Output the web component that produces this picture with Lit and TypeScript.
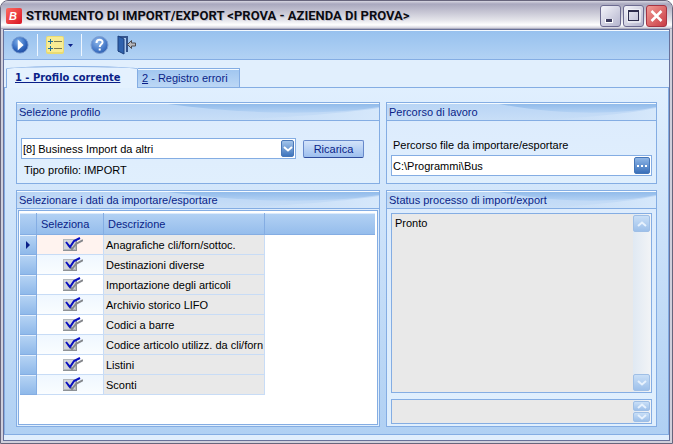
import { LitElement, html, css, svg } from "lit";
import { customElement, property, state } from "lit/decorators.js";

@customElement("group-box")
class GroupBox extends LitElement {
  @property() heading = "";

  static styles = css`
    :host {
      display: flex;
      flex-direction: column;
      min-width: 0;
      border: 1px solid #84ade3;
      box-sizing: border-box;
    }
    .head {
      position: relative;
      flex: none;
      height: 18px;
      box-sizing: border-box;
      border-top: 1px solid #f4faff;
      border-bottom: 1px solid #84ade3;
      background: linear-gradient(#b9d5f5, #c8def7);
      overflow: hidden;
    }
    .swoosh {
      position: absolute;
      inset: 0;
      width: 100%;
      height: 100%;
    }
    h2 {
      position: relative;
      margin: 0;
      padding-left: 2px;
      font-size: 11px;
      line-height: 16px;
      font-weight: 400;
      color: #0a1f88;
      white-space: nowrap;
    }
    .body {
      flex: 1;
      display: flex;
      flex-direction: column;
      min-height: 0;
      background: linear-gradient(#ddecfd, #e0effd);
    }
  `;

  render() {
    return html`
      <div class="head">
        <svg class="swoosh" viewBox="0 0 360 16" preserveAspectRatio="none" aria-hidden="true">
          <defs>
            <linearGradient id="s" x1="0" y1="0" x2="0" y2="1">
              <stop offset="0" stop-color="#91bbea" />
              <stop offset="1" stop-color="#b4d2f4" />
            </linearGradient>
            <linearGradient id="f" x1="0" x2="1">
              <stop offset="0" stop-color="#cfe2f8" stop-opacity="0" />
              <stop offset="1" stop-color="#d6e8fb" />
            </linearGradient>
          </defs>
          <path d="M150 0H360V3C310 11 230 11 150 0Z" fill="url(#s)" />
          <path d="M200 16C260 14 320 10 360 4V16Z" fill="url(#f)" />
        </svg>
        <h2>${this.heading}</h2>
      </div>
      <div class="body"><slot></slot></div>
    `;
  }
}

const chevron = (up: boolean, color: string) => html`
  <svg width="10" height="6" viewBox="0 0 10 6" aria-hidden="true">
    <path d=${up ? "M1 5L5 1.5L9 5" : "M1 1L5 4.5L9 1"} fill="none" stroke=${color} stroke-width="2" />
  </svg>
`;

const checkMark = svg`
  <rect x="0" y="2" width="14" height="12" fill="#8d9196" />
  <rect x="0" y="2" width="13" height="11" fill="#b4b7bb" />
  <rect x="1" y="3" width="11" height="9" fill="#d2d5d9" />
  <path d="M5 8L9 12L13 7L20 3" fill="none" stroke="#85888d" stroke-width="2" />
  <path d="M3 5L7 10L11 4L17 1" fill="none" stroke="#0a10c0" stroke-width="2" />
`;

@customElement("app-root")
class AppRoot extends LitElement {
  @state() private current = 0;

  private rows = [
    "Anagrafiche cli/forn/sottoc.",
    "Destinazioni diverse",
    "Importazione degli articoli",
    "Archivio storico LIFO",
    "Codici a barre",
    "Codice articolo utilizz. da cli/forn",
    "Listini",
    "Sconti",
  ];

  static styles = css`
    :host {
      display: block;
      font-family: "Liberation Sans", Roboto, sans-serif;
      font-size: 11px;
      line-height: 14px;
      color: #000;
    }
    * {
      box-sizing: border-box;
    }
    button,
    input,
    select,
    textarea {
      font: inherit;
      margin: 0;
    }
    svg {
      display: block;
    }
    .window {
      min-height: 100vh;
      display: flex;
      flex-direction: column;
      border: 1px solid #67657c;
      border-radius: 8px 8px 0 0;
      background: linear-gradient(#a9a8bc, #d6d5df 8px, #d0cfdb 8px);
      padding: 0 2px 2px;
    }
    .titlebar {
      height: 28px;
      margin: 0 -2px;
      padding: 1px 5px 0;
      display: flex;
      align-items: center;
      gap: 4px;
      border-radius: 7px 7px 0 0;
      background: linear-gradient(#d8d7e2 0, #a9a8be 3px, #c3c2d1 10px, #e4e4ea 19px, #fff 24px, #d0d0dc 27px, #8e8da2 28px);
    }
    .logo {
      flex: none;
    }
    h1 {
      flex: 1;
      margin: 0;
      font-family: Roboto, "Noto Sans", sans-serif;
      font-size: 13px;
      line-height: 20px;
      font-weight: 700;
      white-space: nowrap;
      overflow: hidden;
      color: #0b0b12;
      text-shadow: 1px 1px 0 #c4c3d0;
    }
    .controls {
      display: flex;
      gap: 2px;
    }
    .control {
      width: 21px;
      height: 22px;
      padding: 0;
      display: grid;
      place-items: center;
      border: 1px solid #6d6b90;
      border-radius: 3px;
      background: linear-gradient(135deg, #f4f4fa, #b4b4cd);
    }
    .control.close {
      border-color: #a53443;
      background: linear-gradient(135deg, #f19a94, #c93c44);
    }
    .client {
      flex: 1;
      display: flex;
      flex-direction: column;
      border: 1px solid #68719a;
      background: #e0eefd;
    }
    .toolbar {
      height: 30px;
      display: flex;
      align-items: center;
      padding: 0 7px;
      border-top: 1px solid #f3f9ff;
      border-bottom: 1px solid #84ade3;
      background: linear-gradient(#97c1ee, #b2d2f4);
    }
    .tool {
      border: 0;
      padding: 0;
      background: none;
      display: flex;
      align-items: center;
      gap: 4px;
    }
    .sep {
      width: 1px;
      height: 22px;
      margin: 0 8px;
      background: #eef6ff;
    }
    .tool.exit {
      margin-left: 8px;
    }
    .tabs {
      display: flex;
      align-items: flex-end;
      height: 28px;
      padding-left: 2px;
      background: #e1effd;
      box-shadow: inset 0 -1px #84ade3;
    }
    .tab {
      border: 1px solid #84ade3;
      padding: 0 8px;
      color: #0a1f88;
      text-align: left;
      white-space: nowrap;
    }
    .tab.active {
      flex: none;
      width: 132px;
      height: 22px;
      border-bottom: 0;
      border-radius: 66px 66px 0 0 / 3px 3px 0 0;
      background: #e4f1fe;
      font-family: "DejaVu Sans Condensed", sans-serif;
      font-weight: 700;
      text-decoration: underline;
    }
    .tab.idle {
      height: 20px;
      width: 102px;
      padding: 0 4px;
      border-left: 0;
      background: linear-gradient(#a0c6f0, #bcd7f5);
      box-shadow: inset 0 1px #f3f9ff;
    }
    .panel {
      flex: 1;
      display: grid;
      grid-template-columns: 364fr 271fr;
      grid-template-rows: 82px 1fr;
      gap: 6px;
      padding: 14px 11px 7px;
      margin-bottom: 5px;
      border: 1px solid #84ade3;
      border-top: 0;
      background: linear-gradient(#e0effe, #cbe1f9 45%, #b0d0f3);
    }
    .profile {
      display: flex;
      align-items: center;
      gap: 7px;
      margin: 17px 15px 4px 4px;
    }
    .field {
      position: relative;
      flex: 1;
      height: 21px;
      display: flex;
      border: 1px solid #84ade3;
      background: #fff;
    }
    .field select,
    .field input {
      appearance: none;
      flex: 1;
      min-width: 0;
      border: 0;
      padding: 0 20px 0 1px;
      background: none;
      color: #000;
      outline: none;
    }
    .drop {
      position: absolute;
      right: 1px;
      top: 1px;
      width: 13px;
      height: 17px;
      display: grid;
      place-items: center;
      border: 1px solid #4a78b8;
      border-radius: 2px;
      background: linear-gradient(#a3c4ea, #3f75bd);
      pointer-events: none;
    }
    .more {
      flex: none;
      width: 16px;
      height: 17px;
      margin: 1px;
      padding: 0;
      display: grid;
      place-items: center;
      border: 1px solid #4576b8;
      border-radius: 2px;
      background: linear-gradient(#8fb6e6, #3a70ba);
    }
    .reload {
      width: 61px;
      height: 18px;
      padding: 0;
      border: 1px solid #6789cb;
      border-bottom-color: #2f4c9c;
      border-radius: 2px;
      background: linear-gradient(#d3e3fa, #9dbfee);
      color: #0a1f88;
    }
    .kind {
      margin: 0 7px;
    }
    .path {
      display: flex;
      flex-direction: column;
      gap: 3px;
      margin: 17px 4px 0;
    }
    .path .field {
      flex: none;
    }
    .path label {
      padding-left: 2px;
    }
    .list {
      flex: 1;
      margin: 1px;
      padding: 2px 2px 0 1px;
      border: 1px solid #84ade3;
      background: #fff;
    }
    table {
      width: 100%;
      border-collapse: separate;
      border-spacing: 0;
      table-layout: fixed;
    }
    th {
      height: 22px;
      padding: 0 2px 0 4px;
      text-align: left;
      font-weight: 400;
      color: #0a1f88;
      background: linear-gradient(#b4d2f4, #95bdec);
      border-right: 1px solid #84ade3;
      border-bottom: 1px solid #84ade3;
      box-shadow: inset 0 1px #dcebfc;
    }
    .c-mark {
      width: 17px;
    }
    .c-check {
      width: 67px;
    }
    .c-text {
      width: 161px;
    }
    th.fill {
      border-right: 0;
    }
    td {
      height: 20px;
      padding: 0 2px;
      border-bottom: 1px solid #c8dcf6;
      border-right: 1px solid #c8dcf6;
      white-space: nowrap;
    }
    td.mark {
      padding: 0;
      border-right-color: #84ade3;
      border-bottom-color: #84ade3;
      background: linear-gradient(#b7d4f4, #8fb9ea);
      box-shadow: inset 0 1px #e4f0fd;
    }
    td.mark svg {
      margin: 0 auto;
    }
    td.tick {
      background: #fff;
    }
    tr:nth-child(even) td.tick {
      background: linear-gradient(#eff7ff, #fafdff);
    }
    tr.current td.tick {
      background: #fff3ef;
    }
    td.text {
      background: #e9e9e9;
    }
    td.none {
      border: 0;
    }
    .check {
      position: relative;
      display: block;
      width: 20px;
      height: 15px;
      margin: 0 0 0 24px;
    }
    .check input {
      position: absolute;
      inset: 0;
      width: 100%;
      height: 100%;
      opacity: 0;
    }
    .status {
      flex: 1;
      display: grid;
      grid-template-rows: 1fr 25px;
      gap: 6px;
      padding: 4px 4px 2px;
    }
    .output {
      display: flex;
      border: 1px solid #84ade3;
      background: #e9e9e9;
    }
    .output textarea {
      flex: 1;
      min-width: 0;
      height: 100%;
      padding: 2px 3px;
      border: 0;
      resize: none;
      outline: none;
      overflow: hidden;
      background: none;
      color: #000;
    }
    .scroll {
      width: 18px;
      padding: 1px 0;
      display: flex;
      flex-direction: column;
      justify-content: space-between;
      background: linear-gradient(90deg, #e0e9f3, #f2f4f6);
    }
    .scroll button {
      width: 17px;
      height: 17px;
      padding: 0;
      display: grid;
      place-items: center;
      border: 1px solid #9fbfe6;
      border-radius: 2px;
      background: linear-gradient(#c9dff7, #9dc0ea);
    }
    .scroll.small button {
      height: 10px;
    }
  `;

  private scroller(small: boolean) {
    return html`
      <div class="scroll ${small ? "small" : ""}">
        <button aria-label="Scorri su">${chevron(true, "#e6f1fd")}</button>
        <button aria-label="Scorri giù">${chevron(false, "#e6f1fd")}</button>
      </div>
    `;
  }

  private titleBar() {
    return html`
      <header class="titlebar">
        <svg class="logo" width="16" height="16" viewBox="0 0 16 16" aria-hidden="true">
          <defs>
            <linearGradient id="red" x1="0" y1="0" x2="1" y2="1">
              <stop offset="0" stop-color="#ff6a60" />
              <stop offset="1" stop-color="#d81524" />
            </linearGradient>
          </defs>
          <rect width="16" height="16" rx="2" fill="url(#red)" />
          <text x="3" y="12" font-size="11" font-weight="700" font-style="italic" font-family="Liberation Sans" fill="#fff">B</text>
        </svg>
        <h1>STRUMENTO DI IMPORT/EXPORT &lt;PROVA - AZIENDA DI PROVA&gt;</h1>
        <div class="controls">
          <button class="control" aria-label="Riduci a icona">
            <svg width="17" height="16" viewBox="0 0 17 16">
              <rect x="3" y="11" width="8" height="4" fill="#fff" />
              <rect x="4" y="11" width="6" height="3" fill="#3c3b5c" />
            </svg>
          </button>
          <button class="control" aria-label="Ingrandisci">
            <svg width="15" height="16" viewBox="0 0 15 16">
              <rect x="2" y="2" width="12" height="12" fill="none" stroke="#fff" />
              <rect x="2.5" y="3.5" width="10" height="9" fill="none" stroke="#2e2d4c" />
              <path d="M2 3H13" stroke="#2e2d4c" stroke-width="2" />
            </svg>
          </button>
          <button class="control close" aria-label="Chiudi">
            <svg width="15" height="16" viewBox="0 0 15 16">
              <path d="M2.5 3L12.5 13M12.5 3L2.5 13" stroke="#fff" stroke-width="2.5" />
            </svg>
          </button>
        </div>
      </header>
    `;
  }

  private toolBar() {
    return html`
      <div class="toolbar" role="toolbar">
        <button class="tool" aria-label="Elabora">
          <svg width="18" height="18" viewBox="0 0 20 20">
            <defs>
              <radialGradient id="ball" cx=".4" cy=".3" r=".8">
                <stop offset="0" stop-color="#7fb0ea" />
                <stop offset=".6" stop-color="#2f66bd" />
                <stop offset="1" stop-color="#1c4494" />
              </radialGradient>
            </defs>
            <circle cx="10" cy="10" r="9" fill="url(#ball)" stroke="#6f94cc" />
            <path d="M7.5 4L14 10L7.5 16Z" fill="#fff" />
          </svg>
        </button>
        <span class="sep"></span>
        <button class="tool" aria-label="Seleziona dati">
          <svg width="18" height="18" viewBox="0 0 18 18">
            <rect width="18" height="18" rx="2" fill="#eadb72" />
            <rect x="1" y="1" width="16" height="15" rx="1" fill="#f7ec94" />
            <path d="M2 5.5H7M4.5 3V8M2 12.5H7M4.5 10V15" stroke="#1f6f96" />
            <path d="M8 5.5H16M8 12.5H16" stroke="#7c7a50" />
          </svg>
          <svg width="5" height="3" viewBox="0 0 5 3"><path d="M0 0H5L2.5 3Z" fill="#0a1f88" /></svg>
        </button>
        <span class="sep"></span>
        <button class="tool" aria-label="Guida">
          <svg width="19" height="20" viewBox="0 0 19 20">
            <defs>
              <radialGradient id="ball2" cx=".4" cy=".3" r=".8">
                <stop offset="0" stop-color="#8fb9ec" />
                <stop offset=".7" stop-color="#3f73c4" />
                <stop offset="1" stop-color="#2a559f" />
              </radialGradient>
            </defs>
            <circle cx="9.5" cy="10" r="8.5" fill="url(#ball2)" stroke="#7f9fd2" />
            <path d="M6.5 8C6.5 3.5 13 4 12.5 7.5C12.3 9.3 9.8 9.5 9.7 12" fill="none" stroke="#fff" stroke-width="2" />
            <rect x="8.7" y="13.5" width="2" height="2" fill="#fff" />
          </svg>
        </button>
        <button class="tool exit" aria-label="Esci">
          <svg width="20" height="20" viewBox="0 0 20 20">
            <path d="M1 1H11V17H9V3H3V17H1Z" fill="#34548c" />
            <path d="M4 3H9V16H4Z" fill="#a9c8ee" />
            <path d="M1 1L7 4V19L1 16Z" fill="#2f62ad" stroke="#1d3f7c" />
            <path d="M10.5 9.5L14.5 5.5V8H18.5V11H14.5V13.5Z" fill="#b9b9bd" stroke="#4b4b50" />
          </svg>
        </button>
      </div>
    `;
  }

  private dataList() {
    return html`
      <div class="list">
        <table>
          <colgroup>
            <col class="c-mark" />
            <col class="c-check" />
            <col class="c-text" />
            <col />
          </colgroup>
          <thead>
            <tr>
              <th></th>
              <th>Seleziona</th>
              <th>Descrizione</th>
              <th class="fill"></th>
            </tr>
          </thead>
          <tbody>
            ${this.rows.map(
              (name, i) => html`
                <tr class=${i === this.current ? "current" : ""} @click=${() => (this.current = i)}>
                  <td class="mark">
                    ${i === this.current
                      ? html`<svg width="4" height="8" viewBox="0 0 4 8"><path d="M0 0L4 4L0 8Z" fill="#0a1f88" /></svg>`
                      : ""}
                  </td>
                  <td class="tick">
                    <label class="check">
                      <svg width="20" height="15" viewBox="0 0 20 15" aria-hidden="true">${checkMark}</svg>
                      <input type="checkbox" aria-label=${name} checked />
                    </label>
                  </td>
                  <td class="text">${name}</td>
                  <td class="none"></td>
                </tr>
              `
            )}
          </tbody>
        </table>
      </div>
    `;
  }

  render() {
    return html`
      <div class="window">
        ${this.titleBar()}
        <main class="client">
          ${this.toolBar()}
          <div class="tabs" role="tablist">
            <button class="tab active" role="tab" aria-selected="true">1 - Profilo corrente</button>
            <button class="tab idle" role="tab" aria-selected="false"><u>2</u> - Registro errori</button>
          </div>
          <div class="panel" role="tabpanel">
            <group-box heading="Selezione profilo">
              <div class="profile">
                <div class="field">
                  <select aria-label="Profilo">
                    <option>[8] Business Import da altri</option>
                  </select>
                  <span class="drop">${chevron(false, "#fff")}</span>
                </div>
                <button class="reload">Ricarica</button>
              </div>
              <div class="kind">Tipo profilo: IMPORT</div>
            </group-box>
            <group-box heading="Percorso di lavoro">
              <div class="path">
                <label for="path">Percorso file da importare/esportare</label>
                <div class="field">
                  <input id="path" type="text" value="C:\\Programmi\\Bus" />
                  <button class="more" aria-label="Sfoglia">
                    <svg width="10" height="2" viewBox="0 0 10 2"><path d="M0 0H2V2H0ZM4 0H6V2H4ZM8 0H10V2H8Z" fill="#fff" /></svg>
                  </button>
                </div>
              </div>
            </group-box>
            <group-box heading="Selezionare i dati da importare/esportare">${this.dataList()}</group-box>
            <group-box heading="Status processo di import/export">
              <div class="status">
                <div class="output">
                  <textarea readonly aria-label="Status" .value=${"Pronto"}></textarea>
                  ${this.scroller(false)}
                </div>
                <div class="output">
                  <textarea readonly rows="1" aria-label="Dettaglio"></textarea>
                  ${this.scroller(true)}
                </div>
              </div>
            </group-box>
          </div>
        </main>
      </div>
    `;
  }
}
